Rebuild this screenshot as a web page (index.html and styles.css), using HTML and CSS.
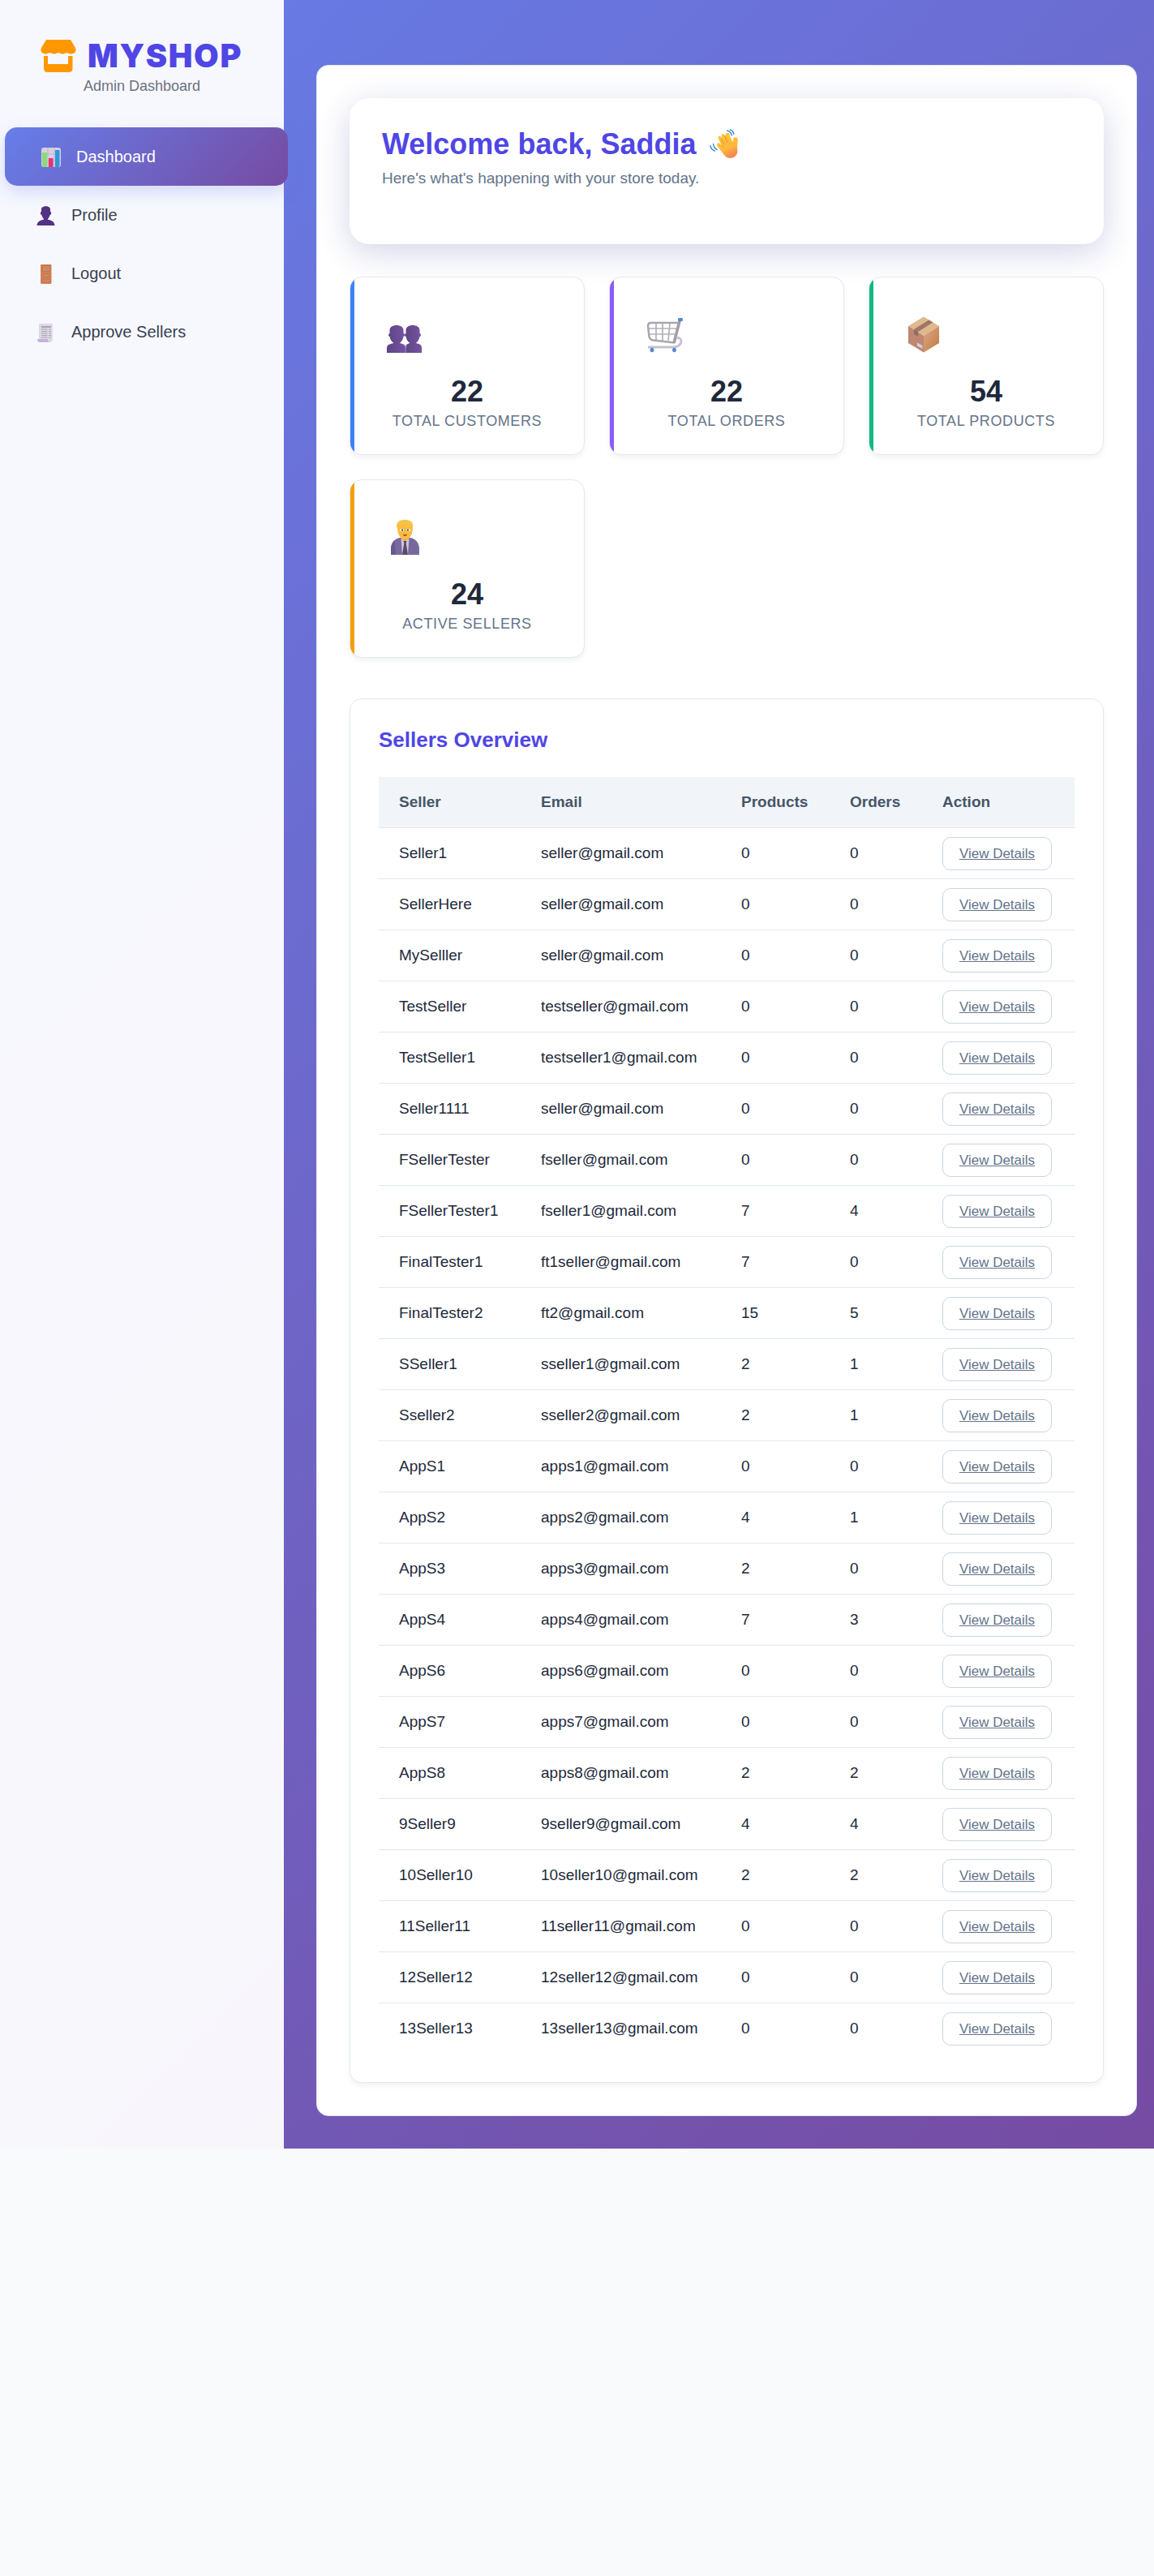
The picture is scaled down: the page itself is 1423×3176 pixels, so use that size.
FILE: index.html
```html
<!DOCTYPE html>
<html lang="en">
<head>
<meta charset="utf-8">
<title>MYSHOP Admin Dashboard</title>
<link rel="stylesheet" href="styles.css">
</head>
<body>
<div class="layout">
  <aside class="sidebar">
    <div class="brand">
      <svg class="brand-icon" viewBox="0 0 44 40"><path fill="#ff9800" d="M7 0h30l6 10c1.200 3 .5 7-5 7.500-3 .2-4-1.500-5.500-1.500s-2.500 1.500-5.200 1.500S23.500 16 22 16s-2.500 1.500-5.200 1.500S13 16 11.500 16 9 17.500 6 17.500C.5 17-.5 13 1 10zM4 20h5v10h25V20h5.500v15.500c0 3-2 4.500-4.500 4.500H8.500C6 40 4 38.500 4 35.500z"/></svg>
      <span class="brand-name">MYSHOP</span>
    </div>
    <div class="brand-sub">Admin Dashboard</div>
    <nav class="nav">
      <a class="nav-item active"><svg class="nav-icon" viewBox="0 0 24 24"><rect width="24" height="24" rx="3" fill="#d9d0df"/><path d="M0 8h24M0 16h24M8 0v24M16 0v24" stroke="#b9adc5" stroke-width=".8"/><path d="M1 6h6v18H3q-2 0-2-2z" fill="#86dc77"/><path d="M9 13h5.500v11H9z" fill="#e9326e"/><path d="M17 3h5.500v19q0 2-2 2H17z" fill="#2e97e0"/></svg>Dashboard</a>
      <a class="nav-item"><svg class="nav-icon" viewBox="0 0 24 24"><path fill="#533285" d="M6 4c0-5 11-5 11 0v3c2 0 1 4-.3 4-.6 2-1.700 4-2.700 4.700v1c4 .6 8 2 8.500 7.300H.5C1 18.700 5 17.300 9 16.700v-1c-1.200-.7-2-2.700-2.600-4.700C5 11 4 7 6 7z"/></svg>Profile</a>
      <a class="nav-item"><svg class="nav-icon" viewBox="0 0 24 24"><rect x="5" width="13.500" height="24" rx="1" fill="#d98350"/><g fill="#c98962" stroke="#be6c4d" stroke-width=".8"><rect x="7" y="1.500" width="10" height="7.500" rx="1"/><rect x="7" y="11.500" width="10" height="4" rx=".7"/><rect x="7" y="18" width="10" height="4" rx=".7"/></g></svg>Logout</a>
      <a class="nav-item"><svg class="nav-icon" viewBox="0 0 24 24"><path fill="#ded8e6" d="M3 .5l1.500 1L6 .5l1.500 1L9 .5l1.500 1 1.500-1 1.500 1 1.500-1 1.500 1 1.500-1 1.800.5V22q-1 2-3 2H5l-2-4z"/><path fill="#c5b2dc" d="M1 20h13q0 4 2 4H4q-3 0-3-4z"/><path d="M6 5h12" stroke="#8f8899" stroke-width="1.300"/><path d="M6 8h7.500M15 8h3M6 10.500h7.500M15 10.500h3M6 13h7.500M15 13h3M6 15.500h7.500M15 15.500h3M6 18h7.500M15 18h3" stroke="#aaa3b4"/></svg>Approve Sellers</a>
    </nav>
  </aside>
  <main class="panel">
    <section class="welcome">
      <h1>Welcome back, Saddia <svg class="wave" viewBox="0 0 36 36"><defs><linearGradient id="hand" x1="0" y1="0" x2=".4" y2="1"><stop offset="0" stop-color="#ffc83d"/><stop offset=".7" stop-color="#ffb83a"/><stop offset="1" stop-color="#f58b52"/></linearGradient></defs><path fill="url(#hand)" d="M9.500 21c-2-3 1.500-5 3-3l2 2-3.800-8.500c-1-3 2-4 3.200-2l1 2-.2-3c0-3 3-3.500 4-1l.6 1.500C19.500 4 23 3.500 24 6l3.500 8.500c1 2 1.500 1 1.500-1 0-4 4-4 5.500-2 .8 3-.5 7.500-.5 11.500 1 5 .5 9-4 12-4 2-9 1-12-3z"/><path d="M14 11.500l4 7.500M18.500 8.500l4 8.500M14.500 20l3 3" fill="none" stroke="#e58b2e"/><path d="M21 2.200q5-.2 6.500 6.300M25 .8q4.500 1.500 5 6M4.500 18q0 4.500 5 8M1 20q0 5 6 7.300" fill="none" stroke="#2583c3" stroke-width="1.300"/></svg></h1>
      <p>Here's what's happening with your store today.</p>
    </section>
    <section class="stats">
      <div class="stat blue"><svg class="stat-icon" viewBox="0 0 48 48"><defs><linearGradient id="purp"><stop offset="0" stop-color="#5e4584"/><stop offset="1" stop-color="#7553a2"/></linearGradient></defs><g fill="url(#purp)"><path d="M5.500 20c0-8 17-8 17 0v4c2-.2 1.800 4 0 4-.7 3.500-2 6-4.200 7.500v.7c4 .8 7 1.500 7 6.300V48H2v-5.500c0-4.500 3.500-5.500 8-6.300v-.7C7.500 34 6.200 31.500 5.600 28c-2 0-2-4 0-4z"/><path d="M25.500 20c0-8 17-8 17 0v4c2-.2 1.800 4 0 4-.7 3.500-2 6-4.200 7.500v.7c4 .8 6.800 1.500 6.800 6.300V48H25.500v-8c0-2 2-3.200 4.500-3.800v-.7c-2.500-1.500-3.800-4-4.400-7.500-2 0-2-4 0-4z"/></g></svg><strong>22</strong><span>Total Customers</span></div>
      <div class="stat violet"><svg class="stat-icon" viewBox="0 0 48 48" fill="none"><path d="M14 12v20M22 12v21M31 12l-2 21M5 18h34M6 25h31" stroke="#b4b0b8" stroke-width="1.700"/><path d="M41 11H8q-4 0-4 4l1.500 13q.7 4 5 4.500l26 3" stroke="#a9a6ac" stroke-width="2.500"/><path d="M43.500 7L36 36" stroke="#a29ea7" stroke-width="3.600"/><path d="M4 41h32q8-.5 9-7c0-3-2-5-6-4.500" stroke="#c9bfd0" stroke-width="2.800"/><rect x="41" y="5" width="6" height="4" rx="1.500" fill="#5389ce"/><ellipse cx="9" cy="44.500" rx="2.400" ry="2.700" fill="#5389ce"/><ellipse cx="36.500" cy="44.500" rx="2.400" ry="2.700" fill="#5389ce"/></svg><strong>22</strong><span>Total Orders</span></div>
      <div class="stat green"><svg class="stat-icon" viewBox="0 0 48 48"><defs><linearGradient id="boxr" x1="0" y1="0" x2="1" y2="1"><stop offset="0" stop-color="#dca886"/><stop offset="1" stop-color="#c07a43"/></linearGradient></defs><path fill="#dfb88d" d="M24 3.500L43 15 24 27 5 15z"/><path fill="#bd8773" d="M5 15l19 12v20.500L5 36z"/><path fill="url(#boxr)" d="M43 15L24 27v20.500L43 36z"/><path fill="#9f7665" d="M30.500 7.500l5 3L17 22l-5-3z"/><path fill="#906b69" d="M12 19l5 3v5.500L12 25z"/><path fill="#d7cbe0" d="M16 35.500l6.500 3.500v4L16 39.500z"/></svg><strong>54</strong><span>Total Products</span></div>
      <div class="stat amber"><svg class="stat-icon" viewBox="0 0 48 48"><path fill="#77689e" d="M7 47V40c0-9 6-13 11-14h13c6 1 11 6 11 14v7z"/><path fill="#67598b" d="M7 47V40c0-5 2-8.500 4.500-11L13 47z"/><path fill="#cfc4dc" d="M19.500 26.500h10L28 47h-7z"/><path fill="#5c4867" d="M22.500 30h4l-.8 3L28 47h-7l2.300-14z"/><path fill="#f5a13c" d="M20 24h9v3l-4.500 3-4.500-3z"/><path fill="#fbbc3c" d="M15 13c0-11 19-11 19 0 0 8-3 15-9.500 15S15 21 15 13z"/><path fill="#f4c44a" d="M14 14c-1-6 3-10 8-10 5-1 12 1 12 6l-.5 5c-1-3-2-4-4-5-4 1-7-1-9-1-3 1-5 2-6.500 5z"/><path fill="#fff" d="M18.500 15h4v3h-4zM26.500 15h4v3h-4z"/><path fill="#4b3c4f" d="M20 15.500h2v2h-2zM27 15.500h2v2h-2z"/><path fill="#a93d37" d="M22 21.500q2.500 1 5 0-.5 2.500-2.500 2.500T22 21.500z"/></svg><strong>24</strong><span>Active Sellers</span></div>
    </section>
    <section class="sellers">
      <h2>Sellers Overview</h2>
      <table>
        <colgroup><col class="c-seller"><col class="c-email"><col class="c-products"><col class="c-orders"><col></colgroup>
        <thead><tr><th>Seller</th><th>Email</th><th>Products</th><th>Orders</th><th>Action</th></tr></thead>
        <tbody>
          <tr><td>Seller1</td><td>seller@gmail.com</td><td>0</td><td>0</td><td><a class="btn">View Details</a></td></tr>
          <tr><td>SellerHere</td><td>seller@gmail.com</td><td>0</td><td>0</td><td><a class="btn">View Details</a></td></tr>
          <tr><td>MySelller</td><td>seller@gmail.com</td><td>0</td><td>0</td><td><a class="btn">View Details</a></td></tr>
          <tr><td>TestSeller</td><td>testseller@gmail.com</td><td>0</td><td>0</td><td><a class="btn">View Details</a></td></tr>
          <tr><td>TestSeller1</td><td>testseller1@gmail.com</td><td>0</td><td>0</td><td><a class="btn">View Details</a></td></tr>
          <tr><td>Seller1111</td><td>seller@gmail.com</td><td>0</td><td>0</td><td><a class="btn">View Details</a></td></tr>
          <tr><td>FSellerTester</td><td>fseller@gmail.com</td><td>0</td><td>0</td><td><a class="btn">View Details</a></td></tr>
          <tr><td>FSellerTester1</td><td>fseller1@gmail.com</td><td>7</td><td>4</td><td><a class="btn">View Details</a></td></tr>
          <tr><td>FinalTester1</td><td>ft1seller@gmail.com</td><td>7</td><td>0</td><td><a class="btn">View Details</a></td></tr>
          <tr><td>FinalTester2</td><td>ft2@gmail.com</td><td>15</td><td>5</td><td><a class="btn">View Details</a></td></tr>
          <tr><td>SSeller1</td><td>sseller1@gmail.com</td><td>2</td><td>1</td><td><a class="btn">View Details</a></td></tr>
          <tr><td>Sseller2</td><td>sseller2@gmail.com</td><td>2</td><td>1</td><td><a class="btn">View Details</a></td></tr>
          <tr><td>AppS1</td><td>apps1@gmail.com</td><td>0</td><td>0</td><td><a class="btn">View Details</a></td></tr>
          <tr><td>AppS2</td><td>apps2@gmail.com</td><td>4</td><td>1</td><td><a class="btn">View Details</a></td></tr>
          <tr><td>AppS3</td><td>apps3@gmail.com</td><td>2</td><td>0</td><td><a class="btn">View Details</a></td></tr>
          <tr><td>AppS4</td><td>apps4@gmail.com</td><td>7</td><td>3</td><td><a class="btn">View Details</a></td></tr>
          <tr><td>AppS6</td><td>apps6@gmail.com</td><td>0</td><td>0</td><td><a class="btn">View Details</a></td></tr>
          <tr><td>AppS7</td><td>apps7@gmail.com</td><td>0</td><td>0</td><td><a class="btn">View Details</a></td></tr>
          <tr><td>AppS8</td><td>apps8@gmail.com</td><td>2</td><td>2</td><td><a class="btn">View Details</a></td></tr>
          <tr><td>9Seller9</td><td>9seller9@gmail.com</td><td>4</td><td>4</td><td><a class="btn">View Details</a></td></tr>
          <tr><td>10Seller10</td><td>10seller10@gmail.com</td><td>2</td><td>2</td><td><a class="btn">View Details</a></td></tr>
          <tr><td>11Seller11</td><td>11seller11@gmail.com</td><td>0</td><td>0</td><td><a class="btn">View Details</a></td></tr>
          <tr><td>12Seller12</td><td>12seller12@gmail.com</td><td>0</td><td>0</td><td><a class="btn">View Details</a></td></tr>
          <tr><td>13Seller13</td><td>13seller13@gmail.com</td><td>0</td><td>0</td><td><a class="btn">View Details</a></td></tr>
        </tbody>
      </table>
    </section>
  </main>
</div>
</body>
</html>
```
FILE: styles.css
```css
* { box-sizing: border-box; margin: 0; padding: 0; }
body {
  font-family: "Liberation Sans", Arial, sans-serif;
  background: #f8fafc;
  color: #1e293b;
}
.layout {
  display: flex;
  background: linear-gradient(135deg, #667eea 0%, #764ba2 100%);
}

/* Sidebar */
.sidebar {
  width: 350px;
  flex: none;
  padding-top: 42px;
  background: rgba(255, 255, 255, .95);
}
.brand {
  display: flex;
  align-items: center;
  height: 54px;
  padding-left: 50px;
  gap: 14px;
}
.brand-icon { width: 44px; height: 40px; }
.brand-name {
  font: 900 39.500px/54px Inter, "Liberation Sans", sans-serif;
  letter-spacing: 1.700px;
  color: #4f46e5;
}
.brand-sub {
  font-size: 18px;
  line-height: 20px;
  text-align: center;
  color: #6b7280;
}
.nav { margin-top: 41px; }
.nav-item {
  display: flex;
  align-items: center;
  width: 349px;
  height: 72px;
  padding-left: 45px;
  gap: 19px;
  font-size: 20px;
  color: #374151;
}
.nav-icon { width: 24px; height: 24px; margin-top: 1px; }
.nav-item.active {
  transform: translateX(6px);
  border-radius: 15px;
  color: #fff;
  background: linear-gradient(135deg, #667eea 0%, #764ba2 100%);
  box-shadow: 0 8px 20px rgba(102, 126, 234, .25);
}

/* Content */
.panel {
  flex: 1;
  min-width: 0;
  margin: 80px 21px 40px 40px;
  padding: 40px;
  background: #fff;
  border: 1px solid #e2e8f0;
  border-radius: 15px;
  overflow: hidden;
}
.welcome {
  height: 180px;
  padding: 37px 40px;
  border-radius: 24px;
  background: #fff;
  box-shadow: 0 10px 40px rgba(31, 38, 135, .2);
}
.welcome h1 {
  font-size: 36px;
  line-height: 40px;
  color: #4f46e5;
  display: flex;
  gap: 16px;
}
.wave { width: 36px; height: 36px; margin-top: 1px; }
.welcome p {
  margin-top: 11px;
  font-size: 19px;
  line-height: 22px;
  color: #64748b;
}

.stats {
  display: grid;
  grid-template-columns: repeat(3, 1fr);
  gap: 30px;
  margin-top: 40px;
}
.stat {
  position: relative;
  display: flex;
  flex-direction: column;
  align-items: center;
  height: 220px;
  padding-top: 45px;
  border: 1px solid #e2e8f0;
  border-radius: 15px;
  overflow: hidden;
  background: #fff;
  box-shadow: 0 4px 6px rgba(0, 0, 0, .05);
}
.stat::before {
  content: "";
  position: absolute;
  inset: 0 auto 0 0;
  width: 5px;
  background: var(--accent);
}
.blue { --accent: #3b82f6; }
.violet { --accent: #8b5cf6; }
.green { --accent: #10b981; }
.amber { --accent: #f59e0b; }
.stat-icon {
  width: 48px;
  height: 48px;
  align-self: flex-start;
  margin-left: 43px;
}
.stat strong { margin-top: 30px; font-size: 36px; line-height: 36px; }
.stat span {
  margin-top: 8px;
  font-size: 18px;
  line-height: 20px;
  letter-spacing: .6px;
  text-transform: uppercase;
  color: #64748b;
}

.sellers {
  margin-top: 50px;
  padding: 35px;
  border: 1px solid #e2e8f0;
  border-radius: 15px;
  background: #fff;
  box-shadow: 0 4px 6px rgba(0, 0, 0, .05);
}
.sellers h2 {
  margin-bottom: 31px;
  font-size: 26px;
  line-height: 30px;
  color: #4f46e5;
}
table {
  width: 100%;
  table-layout: fixed;
  border-collapse: separate;
  border-spacing: 0;
  font-size: 19px;
}
.c-seller { width: 175px; }
.c-email { width: 247px; }
.c-products { width: 134px; }
.c-orders { width: 114px; }
th, td {
  height: 63px;
  padding: 0 25px;
  text-align: left;
  vertical-align: middle;
  border-bottom: 1px solid #e2e8f0;
}
th { background: #f1f5f9; color: #475569; }
tbody tr:last-child td { height: 62px; border-bottom: 0; }
.btn {
  display: block;
  width: 135px;
  height: 41px;
  border: 1px solid #cbd5e1;
  border-radius: 10px;
  font-size: 17px;
  line-height: 39px;
  text-align: center;
  text-decoration: underline;
  color: #64748b;
}
```
